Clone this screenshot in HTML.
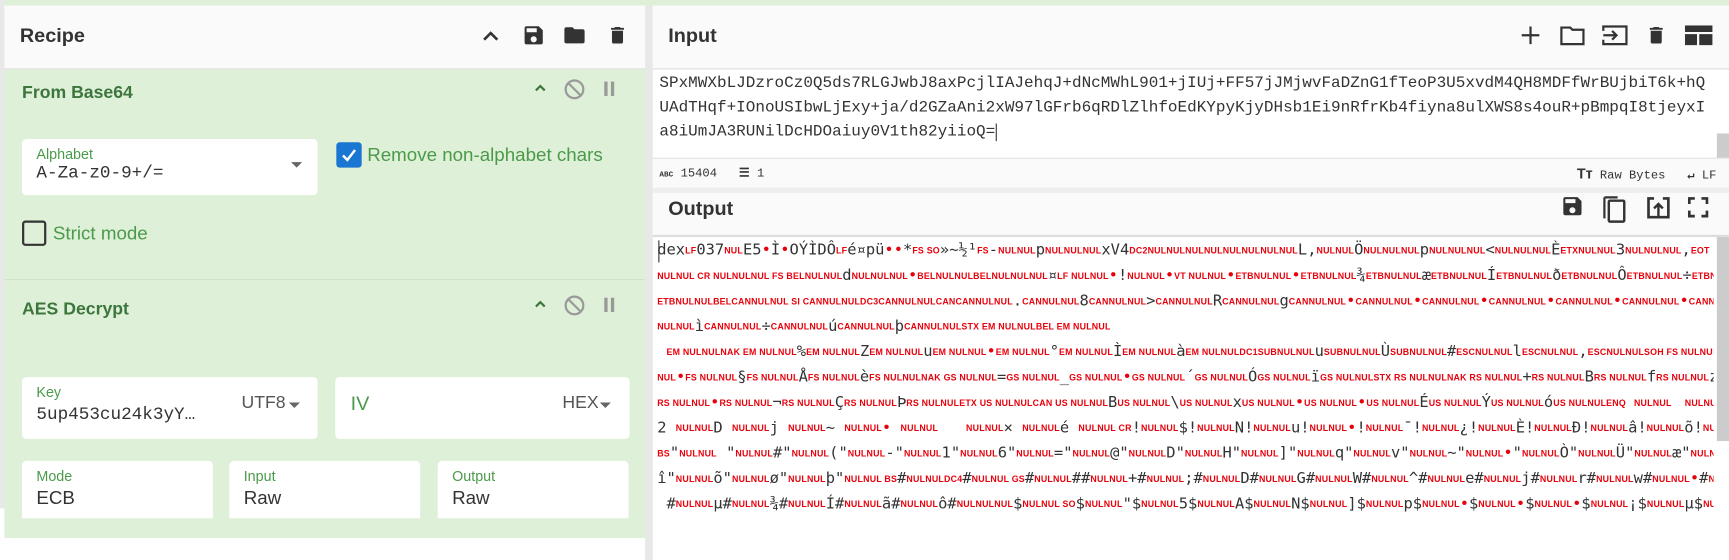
<!DOCTYPE html>
<html><head><meta charset="utf-8">
<style>
*{box-sizing:border-box;margin:0;padding:0}
html,body{width:1729px;height:508px;overflow:hidden;background:#fff}
#wrap{position:absolute;left:0;top:0;width:1568px;height:461px;transform:scale(1.10268);transform-origin:0 0;font-family:"Liberation Sans",sans-serif}
.abs{position:absolute}
.hdr{background:#fafafa;border-bottom:1px solid #ddd}
.title{font-weight:bold;font-size:18px;color:#333}
.op{background:#dff0d8}
.opt{font-weight:bold;font-size:16px;color:#3c763d}
.box{background:#fff;border-radius:4px;position:absolute}
.lbl{position:absolute;left:13px;top:6px;font-size:13px;color:#4a9a4a}
.val{position:absolute;left:13px;font-size:17px;color:#333}
.mono{font-family:"Liberation Mono","DejaVu Sans Mono",monospace}
.ic{position:absolute}
#out{position:absolute;left:596px;top:216px;width:958px;font-family:"DejaVu Sans Mono","Liberation Mono",monospace;font-size:14px;color:#333}
#out div{height:23px;line-height:23px;white-space:nowrap;overflow:hidden}
#out b{color:#e8000b;font-family:"Liberation Sans",sans-serif;font-size:8px;font-weight:bold;letter-spacing:.2px;vertical-align:1px}
#out i{color:#e8000b;font-style:normal}
</style></head><body><div id="wrap">
<div class="abs" style="left:0;top:0;width:1568px;height:5px;background:#dff0d8"></div>
<div class="abs" style="left:0;top:0;width:4px;height:461px;background:#e8e8e8"></div>
<div class="abs hdr" style="left:4px;top:5px;width:581px;height:58px"></div>
<div class="abs title" style="left:18px;top:22px">Recipe</div>
<svg class="ic" style="left:436px;top:24px" width="18" height="18" viewBox="0 0 18 18"><path d="M3 12 L9 6 L15 12" stroke="#333" stroke-width="2.4" fill="none"/></svg>
<svg class="ic" style="left:473px;top:21px" width="22" height="22" viewBox="0 0 24 24"><path d="M17 3H5a2 2 0 0 0-2 2v14a2 2 0 0 0 2 2h14a2 2 0 0 0 2-2V7l-4-4zm-5 16a3 3 0 1 1 0-6 3 3 0 0 1 0 6zm3-10H5V5h10v4z" fill="#333"/></svg>
<svg class="ic" style="left:509px;top:21px" width="24" height="22" viewBox="0 0 24 24"><path d="M10 4H4a2 2 0 0 0-2 2v12a2 2 0 0 0 2 2h16a2 2 0 0 0 2-2V8a2 2 0 0 0-2-2h-8l-2-2z" fill="#333"/></svg>
<svg class="ic" style="left:550px;top:20px" width="20" height="24" viewBox="0 0 24 24"><path d="M6 19a2 2 0 0 0 2 2h8a2 2 0 0 0 2-2V7H6v12zM19 4h-3.5l-1-1h-5l-1 1H5v2h14V4z" fill="#333"/></svg>

<div class="abs op" style="left:4px;top:63px;width:581px;height:425px"></div>
<div class="abs" style="left:4px;top:253px;width:581px;height:1px;background:#cfe3c6"></div>
<div class="abs" style="left:4px;top:488px;width:581px;height:20px;background:#fff"></div>
<div class="abs" style="left:585px;top:5px;width:7px;height:503px;background:#e8e8e8"></div>

<div class="abs opt" style="left:20px;top:76px">From Base64</div>
<svg class="ic" style="left:483px;top:73px" width="14" height="14" viewBox="0 0 14 14"><path d="M3 9 L7 5 L11 9" stroke="#3c763d" stroke-width="2" fill="none"/></svg>
<svg class="ic" style="left:511px;top:71px" width="20" height="20" viewBox="0 0 20 20"><circle cx="10" cy="10" r="8" stroke="#999" stroke-width="2" fill="none"/><path d="M4.5 4.5 L15.5 15.5" stroke="#999" stroke-width="2"/></svg>
<div class="abs" style="left:548px;top:74px;width:3px;height:13px;background:#999"></div>
<div class="abs" style="left:554px;top:74px;width:3px;height:13px;background:#999"></div>

<div class="box" style="left:20px;top:126px;width:268px;height:51px"><div class="lbl" style="left:13px">Alphabet</div><div class="val mono" style="top:22px;font-size:16px">A-Za-z0-9+/=</div>
<div class="abs" style="left:244px;top:21px;width:0;height:0;border-left:5px solid transparent;border-right:5px solid transparent;border-top:5px solid #666"></div></div>
<div class="abs" style="left:305px;top:129px;width:23px;height:23px;background:#1976d2;border-radius:3px"></div>
<svg class="ic" style="left:305px;top:129px" width="23" height="23" viewBox="0 0 23 23"><path d="M6 12 L10 16 L17 7" stroke="#fff" stroke-width="2.2" fill="none"/></svg>
<div class="abs" style="left:333px;top:131px;font-size:17px;color:#4a9a4a">Remove non-alphabet chars</div>
<div class="abs" style="left:20px;top:200px;width:22px;height:23px;border:2px solid #333;border-radius:3px"></div>
<div class="abs" style="left:48px;top:202px;font-size:17px;color:#4a9a4a">Strict mode</div>

<div class="abs opt" style="left:20px;top:272px">AES Decrypt</div>
<svg class="ic" style="left:483px;top:269px" width="14" height="14" viewBox="0 0 14 14"><path d="M3 9 L7 5 L11 9" stroke="#3c763d" stroke-width="2" fill="none"/></svg>
<svg class="ic" style="left:511px;top:267px" width="20" height="20" viewBox="0 0 20 20"><circle cx="10" cy="10" r="8" stroke="#999" stroke-width="2" fill="none"/><path d="M4.5 4.5 L15.5 15.5" stroke="#999" stroke-width="2"/></svg>
<div class="abs" style="left:548px;top:270px;width:3px;height:13px;background:#999"></div>
<div class="abs" style="left:554px;top:270px;width:3px;height:13px;background:#999"></div>

<div class="box" style="left:20px;top:342px;width:268px;height:56px"><div class="lbl">Key</div><div class="val mono" style="top:25px;font-size:16px">5up453cu24k3yY…</div>
<div class="abs" style="left:199px;top:15px;font-size:16px;color:#555">UTF8</div>
<div class="abs" style="left:242px;top:23px;border-left:5px solid transparent;border-right:5px solid transparent;border-top:5px solid #666"></div></div>
<div class="box" style="left:304px;top:342px;width:267px;height:56px"><div class="abs" style="left:14px;top:14px;font-size:18px;color:#4a9a4a">IV</div>
<div class="abs" style="left:206px;top:15px;font-size:16px;color:#555">HEX</div>
<div class="abs" style="left:240px;top:23px;border-left:5px solid transparent;border-right:5px solid transparent;border-top:5px solid #666"></div></div>
<div class="box" style="left:20px;top:418px;width:173px;height:52px;border-radius:4px 4px 0 0"><div class="lbl">Mode</div><div class="val" style="top:24px">ECB</div></div>
<div class="box" style="left:208px;top:418px;width:173px;height:52px;border-radius:4px 4px 0 0"><div class="lbl">Input</div><div class="val" style="top:24px">Raw</div></div>
<div class="box" style="left:397px;top:418px;width:173px;height:52px;border-radius:4px 4px 0 0"><div class="lbl">Output</div><div class="val" style="top:24px">Raw</div></div>

<div class="abs hdr" style="left:592px;top:5px;width:976px;height:58px"></div>
<div class="abs title" style="left:606px;top:22px">Input</div>
<svg class="ic" style="left:1377px;top:21px" width="22" height="22" viewBox="0 0 22 22"><path d="M11 3V19M3 11H19" stroke="#333" stroke-width="2"/></svg>
<svg class="ic" style="left:1414px;top:21px" width="25" height="22" viewBox="0 0 25 22"><path d="M2 4h8l2 2h10v13H2z" stroke="#333" stroke-width="2" fill="none"/></svg>
<svg class="ic" style="left:1452px;top:21px" width="25" height="22" viewBox="0 0 25 22"><path d="M2 7V3H23V19H2V15M2 11H14M10 7l4 4-4 4" stroke="#333" stroke-width="2" fill="none"/></svg>
<svg class="ic" style="left:1492px;top:20px" width="20" height="24" viewBox="0 0 24 24"><path d="M6 19a2 2 0 0 0 2 2h8a2 2 0 0 0 2-2V7H6v12zM19 4h-3.5l-1-1h-5l-1 1H5v2h14V4z" fill="#333"/></svg>
<svg class="ic" style="left:1528px;top:23px" width="25" height="18" viewBox="0 0 25 18"><path d="M0 0h25v6H0zM0 8h11v10H0zM13 8h12v10H13z" fill="#333"/></svg>

<div class="abs mono" style="left:598px;top:63px;width:960px;font-size:14.5px;line-height:22px;color:#333;padding-top:2px">
<div style="white-space:nowrap">SPxMWXbLJDzroCz0Q5ds7RLGJwbJ8axPcjlIAJehqJ+dNcMWhL901+jIUj+FF57jJMjwvFaDZnG1fTeoP3U5xvdM4QH8MDFfWrBUjbiT6k+hQ</div>
<div style="white-space:nowrap">UAdTHqf+IOnoUSIbwLjExy+ja/d2GZaAni2xW97lGFrb6qRDlZlhfoEdKYpyKjyDHsb1Ei9nRfrKb4fiyna8ulXWS8s4ouR+pBmpqI8tjeyxI</div>
<div style="white-space:nowrap">a8iUmJA3RUNilDcHDOaiuy0V1th82yiioQ=<span style="border-left:1px solid #333"></span></div>
</div>
<div class="abs" style="left:1557px;top:121px;width:11px;height:22px;background:#ccc"></div>
<div class="abs" style="left:592px;top:143px;width:976px;height:1px;background:#ddd"></div>
<div class="abs" style="left:592px;top:144px;width:976px;height:26px;background:#fafafa"></div>
<div class="abs mono" style="left:598px;top:150px;font-size:11px;color:#333"><span style="font-size:7px;font-weight:bold">ABC</span> 15404 &nbsp; <span style="font-weight:bold">☰</span> 1</div>
<div class="abs mono" style="left:1430px;top:150px;font-size:11px;color:#333"><b style="font-family:'Liberation Sans';font-size:13px">Tт</b> Raw Bytes &nbsp; <b>↵</b> LF</div>
<div class="abs" style="left:592px;top:170px;width:976px;height:5px;background:#eee"></div>
<div class="abs hdr" style="left:592px;top:175px;width:976px;height:39px"></div>
<div class="abs title" style="left:606px;top:179px">Output</div>
<svg class="ic" style="left:1415px;top:176px" width="22" height="22" viewBox="0 0 24 24"><path d="M17 3H5a2 2 0 0 0-2 2v14a2 2 0 0 0 2 2h14a2 2 0 0 0 2-2V7l-4-4zm-5 16a3 3 0 1 1 0-6 3 3 0 0 1 0 6zm3-10H5V5h10v4z" fill="#333"/></svg>
<svg class="ic" style="left:1452px;top:175px" width="24" height="28" viewBox="0 0 24 28"><path d="M3 4V23M3 4H15" stroke="#333" stroke-width="2" fill="none"/><rect x="7" y="7" width="14" height="19" rx="1" stroke="#333" stroke-width="2.2" fill="none"/></svg>
<svg class="ic" style="left:1492px;top:177px" width="24" height="22" viewBox="0 0 24 22"><path d="M8 3H3v17h18V3h-5" stroke="#333" stroke-width="2.4" fill="none"/><path d="M12 19V8M8 12l4-4 4 4" stroke="#333" stroke-width="2.2" fill="none"/></svg>
<svg class="ic" style="left:1530px;top:178px" width="20" height="20" viewBox="0 0 20 20"><path d="M2 7V2h5M13 2h5v5M18 13v5h-5M7 18H2v-5" stroke="#333" stroke-width="2.4" fill="none"/></svg>
<div class="abs" style="left:592px;top:214px;width:976px;height:1px;background:#ddd"></div>
<div class="abs" style="left:1557px;top:215px;width:11px;height:185px;background:#ccc"></div>
<div class="abs" style="left:597px;top:218px;width:1px;height:20px;background:#333"></div>

<div id="out">
<div>dex<b>LF</b>037<b>NUL</b>E5<i>•</i>Ì<i>•</i>OÝÌDÔ<b>LF</b>é¤pü<i>••</i>*<b>FS SO</b>»~½¹<b>FS</b>-<b>NULNUL</b>p<b>NULNULNUL</b>xV4<b>DC2NULNULNULNULNULNULNULNUL</b>L,<b>NULNUL</b>Ö<b>NULNULNUL</b>p<b>NULNULNUL</b>&lt;<b>NULNULNUL</b>È<b>ETXNULNUL</b>3<b>NULNULNUL</b>,<b>EOT</b></div>
<div><b>NULNUL CR NULNULNUL FS BELNULNUL</b>d<b>NULNULNUL</b><i>•</i><b>BELNULNULBELNULNULNUL</b>¤<b>LF NULNUL</b><i>•</i>!<b>NULNUL</b><i>•</i><b>VT NULNUL</b><i>•</i><b>ETBNULNUL</b><i>•</i><b>ETBNULNUL</b>¾<b>ETBNULNUL</b>æ<b>ETBNULNUL</b>Í<b>ETBNULNUL</b>ð<b>ETBNULNUL</b>Ô<b>ETBNULNUL</b>÷<b>ETBNULNUL</b>ý</div>
<div><b>ETBNULNULBELCANNULNUL SI CANNULNULDC3CANNULNULCANCANNULNUL</b>.<b>CANNULNUL</b>8<b>CANNULNUL</b>&gt;<b>CANNULNUL</b>R<b>CANNULNUL</b>g<b>CANNULNUL</b><i>•</i><b>CANNULNUL</b><i>•</i><b>CANNULNUL</b><i>•</i><b>CANNULNUL</b><i>•</i><b>CANNULNUL</b><i>•</i><b>CANNULNUL</b><i>•</i><b>CANNULNUL</b>Õ<b>CANNUL</b></div>
<div><b>NULNUL</b>ì<b>CANNULNUL</b>÷<b>CANNULNUL</b>ú<b>CANNULNUL</b>þ<b>CANNULNULSTX EM NULNULBEL EM NULNUL</b></div>
<div>&nbsp;<b>EM NULNULNAK EM NULNUL</b>%<b>EM NULNUL</b>Z<b>EM NULNUL</b>u<b>EM NULNUL</b><i>•</i><b>EM NULNUL</b>°<b>EM NULNUL</b>Ì<b>EM NULNUL</b>à<b>EM NULNULDC1SUBNULNUL</b>u<b>SUBNULNUL</b>Ù<b>SUBNULNUL</b>#<b>ESCNULNUL</b>l<b>ESCNULNUL</b>,<b>ESCNULNULSOH FS NULNUL</b>B<b>FS NUL</b></div>
<div><b>NUL</b><i>•</i><b>FS NULNUL</b>§<b>FS NULNUL</b>Å<b>FS NULNUL</b>è<b>FS NULNULNAK GS NULNUL</b>=<b>GS NULNUL</b>_<b>GS NULNUL</b><i>•</i><b>GS NULNUL</b>´<b>GS NULNUL</b>Ó<b>GS NULNUL</b>ï<b>GS NULNULSTX RS NULNULNAK RS NULNUL</b>+<b>RS NULNUL</b>B<b>RS NULNUL</b>f<b>RS NULNUL</b>z</div>
<div><b>RS NULNUL</b><i>•</i><b>RS NULNUL</b>¬<b>RS NULNUL</b>Ç<b>RS NULNUL</b>Þ<b>RS NULNULETX US NULNULCAN US NULNUL</b>B<b>US NULNUL</b>\<b>US NULNUL</b>x<b>US NULNUL</b><i>•</i><b>US NULNUL</b><i>•</i><b>US NULNUL</b>É<b>US NULNUL</b>Ý<b>US NULNUL</b>ó<b>US NULNULENQ &nbsp; NULNUL &nbsp; &nbsp; NULNUL</b></div>
<div>2 <b>NULNUL</b>D <b>NULNUL</b>j <b>NULNUL</b>~ <b>NULNUL</b><i>•</i> <b>NULNUL</b> &nbsp; <b>NULNUL</b>× <b>NULNUL</b>é <b>NULNUL CR</b>!<b>NULNUL</b>$!<b>NULNUL</b>N!<b>NULNUL</b>u!<b>NULNUL</b><i>•</i>!<b>NULNUL</b>¯!<b>NULNUL</b>¿!<b>NULNUL</b>È!<b>NULNUL</b>Ð!<b>NULNUL</b>â!<b>NULNUL</b>õ!<b>NULNUL</b></div>
<div><b>BS</b>"<b>NULNUL</b> "<b>NULNUL</b>#"<b>NULNUL</b>("<b>NULNUL</b>-"<b>NULNUL</b>1"<b>NULNUL</b>6"<b>NULNUL</b>="<b>NULNUL</b>@"<b>NULNUL</b>D"<b>NULNUL</b>H"<b>NULNUL</b>]"<b>NULNUL</b>q"<b>NULNUL</b>v"<b>NULNUL</b>~"<b>NULNUL</b><i>•</i>"<b>NULNUL</b>Ò"<b>NULNUL</b>Ü"<b>NULNUL</b>æ"<b>NULNUL</b></div>
<div>î"<b>NULNUL</b>õ"<b>NULNUL</b>ø"<b>NULNUL</b>þ"<b>NULNUL BS</b>#<b>NULNULDC4</b>#<b>NULNUL GS</b>#<b>NULNUL</b>##<b>NULNUL</b>+#<b>NULNUL</b>;#<b>NULNUL</b>D#<b>NULNUL</b>G#<b>NULNUL</b>W#<b>NULNUL</b>^#<b>NULNUL</b>e#<b>NULNUL</b>j#<b>NULNUL</b>r#<b>NULNUL</b>w#<b>NULNUL</b><i>•</i>#<b>NULNUL</b></div>
<div>&nbsp;#<b>NULNUL</b>µ#<b>NULNUL</b>¾#<b>NULNUL</b>Í#<b>NULNUL</b>ã#<b>NULNUL</b>ô#<b>NULNULNUL</b>$<b>NULNUL SO</b>$<b>NULNUL</b>"$<b>NULNUL</b>5$<b>NULNUL</b>A$<b>NULNUL</b>N$<b>NULNUL</b>]$<b>NULNUL</b>p$<b>NULNUL</b><i>•</i>$<b>NULNUL</b><i>•</i>$<b>NULNUL</b><i>•</i>$<b>NULNUL</b>¡$<b>NULNUL</b>µ$<b>NULNUL</b></div>
</div>
</div></body></html>
